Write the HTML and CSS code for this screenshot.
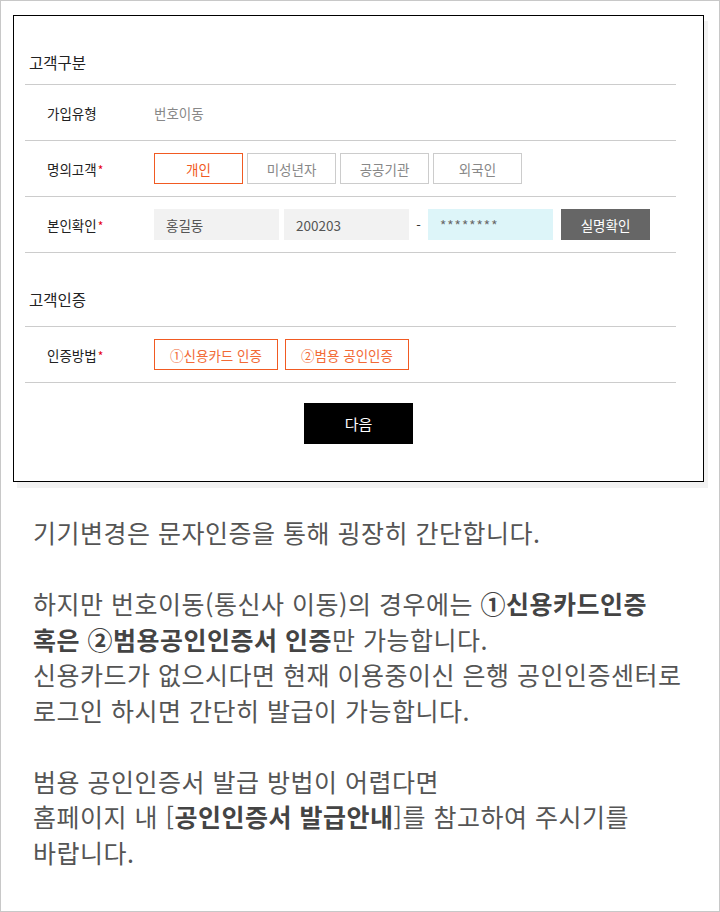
FILE: index.html
```html
<!DOCTYPE html>
<html lang="ko">

<head>
    <meta charset="UTF-8">
    <meta name="viewport" content="width=device-width, initial-scale=1.0">
    <title>기기변경</title>
    <link rel="stylesheet" href="styles.css">
</head>

<body>
    <div class="page">
        <div class="form-box">
            <div class="section">
                <h3 class="sec-title">고객구분</h3>
                <div class="row">
                    <div class="label">가입유형</div>
                    <div class="value plain">번호이동</div>
                </div>
                <div class="row">
                    <div class="label">명의고객<span class="req">*</span></div>
                    <div class="value">
                        <button class="opt active">개인</button>
                        <button class="opt">미성년자</button>
                        <button class="opt">공공기관</button>
                        <button class="opt">외국인</button>
                    </div>
                </div>
                <div class="row">
                    <div class="label">본인확인<span class="req">*</span></div>
                    <div class="value">
                        <input type="text" class="field" value="홍길동">
                        <input type="text" class="field" value="200203">
                        <span class="dash">-</span>
                        <input type="text" class="field secret" value="********">
                        <button class="check-btn">실명확인</button>
                    </div>
                </div>
            </div>

            <div class="section second">
                <h3 class="sec-title">고객인증</h3>
                <div class="row">
                    <div class="label">인증방법<span class="req">*</span></div>
                    <div class="value">
                        <button class="auth">①신용카드 인증</button>
                        <button class="auth">②범용 공인인증</button>
                    </div>
                </div>
            </div>

            <div class="actions">
                <button class="next-btn">다음</button>
            </div>
        </div>

        <div class="notice">
            <p>기기변경은 문자인증을 통해 굉장히 간단합니다.</p>
            <p>하지만 번호이동(통신사 이동)의 경우에는 <b>①신용카드인증<br>혹은 ②범용공인인증서 인증</b>만 가능합니다.<br>
                신용카드가 없으시다면 현재 이용중이신 은행 공인인증센터로<br>
                로그인 하시면 간단히 발급이 가능합니다.</p>
            <p>범용 공인인증서 발급 방법이 어렵다면<br>
                홈페이지 내 [<b>공인인증서 발급안내</b>]를 참고하여 주시기를<br>
                바랍니다.</p>
        </div>
    </div>
</body>

</html>
```

FILE: styles.css
```css
* {
    box-sizing: border-box;
}

body {
    margin: 0;
    font-family: "Noto Sans CJK KR", "Noto Sans", sans-serif;
    background: #fff;
}

.page {
    height: 912px;
    border: 1px solid #c8c8c8;
    padding: 14px 0 0 12px;
}

.form-box {
    width: 691px;
    border: 1px solid #000;
    padding: 24px 27px 37px 11px;
    box-shadow: 4px 6px 0 #f2f2f2;
}

.sec-title {
    margin: 0;
    padding: 11px 0 11px 4px;
    font-size: 15.5px;
    line-height: 22px;
    font-weight: normal;
    color: #222;
    border-bottom: 1px solid #ccc;
}

.second .sec-title {
    padding: 35px 0 16px 4px;
}

.row {
    display: flex;
    align-items: center;
    height: 56px;
    border-bottom: 1px solid #ccc;
}

.label {
    width: 129px;
    padding-left: 22px;
    font-size: 13.5px;
    color: #222;
}

.req {
    color: #e60012;
    font-size: 12px;
    margin-left: 1px;
}

.value {
    display: flex;
    align-items: center;
}

.plain {
    font-size: 13.5px;
    color: #888;
}

button,
input {
    font-family: inherit;
}

.opt {
    width: 89px;
    height: 31px;
    margin-right: 4px;
    background: #fff;
    border: 1px solid #ccc;
    font-size: 13.5px;
    color: #888;
    padding: 0;
}

.opt.active {
    border-color: #f15a22;
    color: #f15a22;
}

.field {
    width: 125px;
    height: 31px;
    margin-right: 5px;
    border: none;
    background: #f2f2f2;
    padding: 0 12px;
    font-size: 13.5px;
    color: #555;
}

.dash {
    width: 9px;
    margin-right: 5px;
    font-size: 13px;
    color: #333;
    text-align: center;
}

.field.secret {
    background: #ddf5f9;
    letter-spacing: 1px;
    color: #666;
    margin-right: 8px;
}

.check-btn {
    width: 89px;
    height: 31px;
    border: none;
    background: #666;
    color: #fff;
    font-size: 13.5px;
    padding: 0;
}

.auth {
    width: 124px;
    height: 31px;
    margin-right: 7px;
    background: #fff;
    border: 1px solid #f15a22;
    color: #f26a36;
    font-size: 13.5px;
    padding: 0;
}

.actions {
    padding-top: 20px;
    padding-left: 16px;
    text-align: center;
}

.next-btn {
    width: 109px;
    height: 41px;
    border: none;
    background: #000;
    color: #fff;
    font-size: 15px;
}

.notice {
    padding: 33px 0 0 20px;
    font-size: 25px;
    line-height: 35.5px;
    color: #555;
    letter-spacing: 0.5px;
}

.notice p {
    margin: 0 0 35.5px;
}

.notice b {
    color: #444;
}
```
